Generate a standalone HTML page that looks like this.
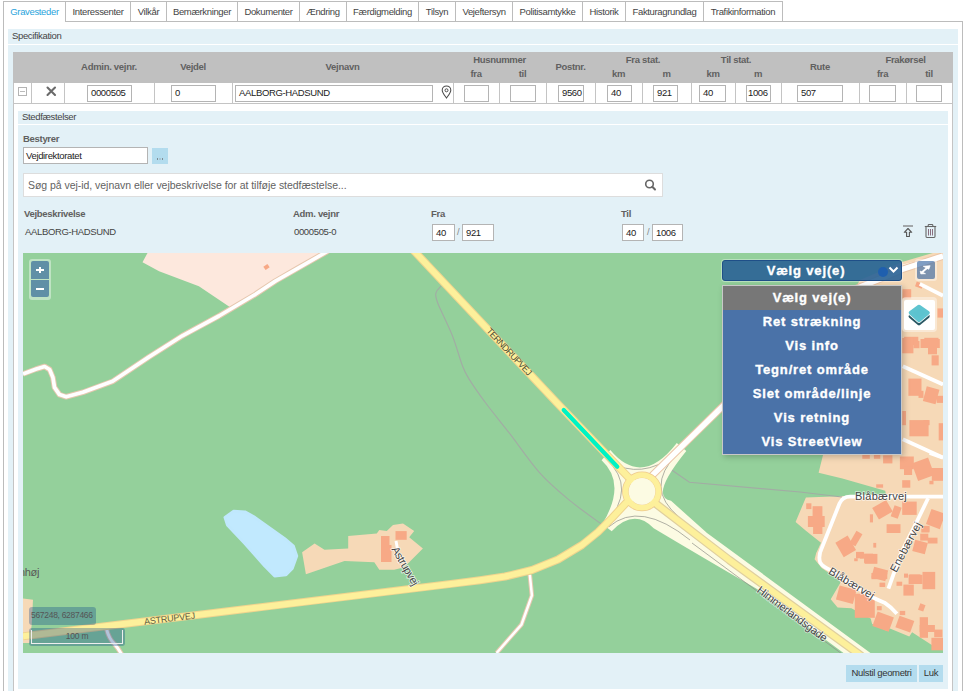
<!DOCTYPE html>
<html><head><meta charset="utf-8">
<style>
*{box-sizing:border-box;margin:0;padding:0}
html,body{width:964px;height:691px;overflow:hidden;background:#fff}
body{position:relative;font-family:"Liberation Sans",sans-serif;font-size:9.5px;color:#444;letter-spacing:-0.35px}
.a{position:absolute}
.t{position:absolute;white-space:nowrap;line-height:12px}
.tab{position:absolute;top:1px;height:21px;border:1px solid #bcbcbc;background:#fff;text-align:center;line-height:19px;color:#444}
.hd{position:absolute;font-weight:bold;color:#606060;letter-spacing:-0.3px;text-align:center;line-height:12px;white-space:nowrap}
.vd{position:absolute;top:83px;width:1px;height:20px;background:#c4c4c4}
.in{position:absolute;top:85px;height:17px;border:1px solid #b4b4b4;background:#fff;line-height:13px;padding-left:3px;color:#222;white-space:nowrap}
.ib{position:absolute;height:17px;border:1px solid #b4b4b4;background:#fff;line-height:15px;padding-left:3px;color:#222;white-space:nowrap}
.lbl{position:absolute;font-weight:bold;color:#606060;letter-spacing:-0.3px;white-space:nowrap;line-height:12px}
</style></head><body>

<!-- outer container -->
<div class="a" style="left:3px;top:21px;width:960px;height:680px;border:1px solid #bcbcbc;border-bottom:none"></div>

<!-- tabs -->
<div class="tab" style="left:3px;width:63px;border-bottom:none;height:21px;color:#2aa4dc">Gravesteder</div>
<div class="a" style="left:4px;top:21px;width:61px;height:1px;background:#fff"></div>
<div class="tab" style="left:65px;width:66px">Interessenter</div>
<div class="tab" style="left:130px;width:37px">Vilkår</div>
<div class="tab" style="left:166px;width:72px">Bemærkninger</div>
<div class="tab" style="left:237px;width:63px">Dokumenter</div>
<div class="tab" style="left:299px;width:48px">Ændring</div>
<div class="tab" style="left:346px;width:73px">Færdigmelding</div>
<div class="tab" style="left:418px;width:38px">Tilsyn</div>
<div class="tab" style="left:455px;width:58px">Vejeftersyn</div>
<div class="tab" style="left:512px;width:71px">Politisamtykke</div>
<div class="tab" style="left:582px;width:44px">Historik</div>
<div class="tab" style="left:625px;width:79px">Fakturagrundlag</div>
<div class="tab" style="left:703px;width:80px">Trafikinformation</div>

<!-- specification -->
<div class="a" style="left:8px;top:29px;width:950px;height:15px;background:#e3f1f7"></div>
<div class="t" style="left:12px;top:30px">Specifikation</div>
<div class="a" style="left:8px;top:45px;width:950px;height:646px;background:#e3f1f7"></div>

<!-- table -->
<div class="a" style="left:13px;top:52px;width:940px;height:639px;background:#fff;border:1px solid #c4c4c4;border-top:none;border-bottom:none"></div>
<div class="a" style="left:13px;top:52px;width:940px;height:31px;background:#c0c0c0"></div>
<div class="a" style="left:13px;top:103px;width:940px;height:1px;background:#c4c4c4"></div>

<div class="hd" style="left:64px;width:90px;top:61px">Admin. vejnr.</div>
<div class="hd" style="left:154px;width:78px;top:61px">Vejdel</div>
<div class="hd" style="left:232px;width:221px;top:61px">Vejnavn</div>
<div class="hd" style="left:453px;width:93px;top:54px">Husnummer</div>
<div class="hd" style="left:453px;width:46px;top:68px">fra</div>
<div class="hd" style="left:499px;width:47px;top:68px">til</div>
<div class="hd" style="left:546px;width:49px;top:61px">Postnr.</div>
<div class="hd" style="left:595px;width:96px;top:54px">Fra stat.</div>
<div class="hd" style="left:595px;width:47px;top:68px">km</div>
<div class="hd" style="left:642px;width:49px;top:68px">m</div>
<div class="hd" style="left:691px;width:90px;top:54px">Til stat.</div>
<div class="hd" style="left:691px;width:44px;top:68px">km</div>
<div class="hd" style="left:735px;width:46px;top:68px">m</div>
<div class="hd" style="left:781px;width:78px;top:61px">Rute</div>
<div class="hd" style="left:859px;width:93px;top:54px">Frakørsel</div>
<div class="hd" style="left:859px;width:47px;top:68px">fra</div>
<div class="hd" style="left:906px;width:46px;top:68px">til</div>

<div class="vd" style="left:31px"></div>
<div class="vd" style="left:64px"></div>
<div class="vd" style="left:154px"></div>
<div class="vd" style="left:232px"></div>
<div class="vd" style="left:453px"></div>
<div class="vd" style="left:499px"></div>
<div class="vd" style="left:546px"></div>
<div class="vd" style="left:595px"></div>
<div class="vd" style="left:642px"></div>
<div class="vd" style="left:691px"></div>
<div class="vd" style="left:735px"></div>
<div class="vd" style="left:781px"></div>
<div class="vd" style="left:859px"></div>
<div class="vd" style="left:906px"></div>

<!-- row icons -->
<div class="a" style="left:18px;top:87px;width:9px;height:9px;border:1px solid #b4b4b4"><div class="a" style="left:1px;top:3px;width:5px;height:1px;background:#bbb"></div></div>
<svg class="a" style="left:45px;top:85px" width="12" height="12" viewBox="0 0 12 12"><path d="M2.5 2.5L10 10M10 2.5L2.5 10" stroke="#6a6a6a" stroke-width="2.1" stroke-linecap="round"/></svg>

<div class="in" style="left:87px;width:45px">0000505</div>
<div class="in" style="left:171px;width:45px">0</div>
<div class="in" style="left:235px;width:198px">AALBORG-HADSUND</div>
<svg class="a" style="left:441px;top:85px" width="11" height="14" viewBox="0 0 11 14"><path d="M5.5 13C3 9.5 1.2 7.3 1.2 5.2A4.3 4.3 0 0 1 9.8 5.2C9.8 7.3 8 9.5 5.5 13Z" fill="none" stroke="#4a4a4a" stroke-width="1.05"/><circle cx="5.5" cy="5.3" r="1.5" fill="none" stroke="#4a4a4a" stroke-width="1"/></svg>
<div class="in" style="left:464px;width:25px"></div>
<div class="in" style="left:510px;width:26px"></div>
<div class="in" style="left:558px;width:26px">9560</div>
<div class="in" style="left:607px;width:25px">40</div>
<div class="in" style="left:653px;width:25px">921</div>
<div class="in" style="left:699px;width:27px">40</div>
<div class="in" style="left:746px;width:25px;padding-left:1px">1006</div>
<div class="in" style="left:797px;width:46px">507</div>
<div class="in" style="left:869px;width:27px"></div>
<div class="in" style="left:916px;width:26px"></div>

<!-- stedfaestelser panel -->
<div class="a" style="left:18px;top:111px;width:930px;height:13px;background:#e3f1f7"></div>
<div class="t" style="left:22px;top:111px;color:#444">Stedfæstelser</div>
<div class="a" style="left:18px;top:125px;width:930px;height:564px;background:#e3f1f7"></div>

<div class="lbl" style="left:23px;top:133px">Bestyrer</div>
<div class="ib" style="left:23px;top:147px;width:125px;padding-left:2px">Vejdirektoratet</div>
<div class="a" style="left:152px;top:148px;width:16px;height:16px;background:#b3dcee"></div>
<div class="a" style="left:157px;top:158px;width:1px;height:2px;background:#7e8c94"></div><div class="a" style="left:159px;top:158px;width:2px;height:2px;background:#a9c3cf"></div><div class="a" style="left:162px;top:158px;width:1px;height:2px;background:#7e8c94"></div>

<div class="a" style="left:23px;top:173px;width:640px;height:24px;background:#fff;border:1px solid #ddd"></div>
<div class="t" style="left:28px;top:179px;font-size:10.5px;letter-spacing:-0.04px;color:#626262">Søg på vej-id, vejnavn eller vejbeskrivelse for at tilføje stedfæstelse...</div>
<svg class="a" style="left:644px;top:179px" width="13" height="12" viewBox="0 0 13 12"><circle cx="5.5" cy="5" r="3.8" fill="none" stroke="#666" stroke-width="1.6"/><path d="M8.3 7.8L11 10.5" stroke="#666" stroke-width="2" stroke-linecap="round"/></svg>

<div class="lbl" style="left:24px;top:208px">Vejbeskrivelse</div>
<div class="lbl" style="left:293px;top:208px">Adm. vejnr</div>
<div class="lbl" style="left:431px;top:208px">Fra</div>
<div class="lbl" style="left:621px;top:208px">Til</div>
<div class="t" style="left:25px;top:226px">AALBORG-HADSUND</div>
<div class="t" style="left:294px;top:226px">0000505-0</div>
<div class="ib" style="left:432px;top:224px;width:23px">40</div>
<div class="t" style="left:457px;top:226px;color:#888">/</div>
<div class="ib" style="left:462px;top:224px;width:32px">921</div>
<div class="ib" style="left:622px;top:224px;width:22px">40</div>
<div class="t" style="left:647px;top:226px;color:#888">/</div>
<div class="ib" style="left:652px;top:224px;width:31px">1006</div>

<svg class="a" style="left:902px;top:224px" width="12" height="14" viewBox="0 0 12 14"><path d="M1 2H11" stroke="#777" stroke-width="1.2"/><path d="M6 4.5L2.3 8.3H4.6V12.5H7.4V8.3H9.7Z" fill="none" stroke="#555" stroke-width="1.1" stroke-linejoin="round"/></svg>
<svg class="a" style="left:924px;top:223px" width="13" height="16" viewBox="0 0 13 16"><path d="M0.8 3.5H12.2" stroke="#666" stroke-width="1.1"/><path d="M4.2 3.2V2.3Q4.2 1.5 5 1.5H8Q8.8 1.5 8.8 2.3V3.2" fill="none" stroke="#666" stroke-width="1.1"/><path d="M2 4V13.6Q2 14.5 2.9 14.5H10.1Q11 14.5 11 13.6V4" fill="none" stroke="#666" stroke-width="1.1"/><path d="M4.5 6V12.5M6.5 6V12.5M8.5 6V12.5" stroke="#8a6f80" stroke-width="1"/></svg>

<!-- MAP -->
<div class="a" id="map" style="left:23px;top:253px;width:920px;height:400px;background:#94d09a;overflow:hidden">
<svg width="920" height="400" viewBox="23 253 920 400" style="position:absolute;left:0;top:0">
<rect x="23" y="253" width="920" height="400" fill="#94d09b"/>
<!-- pink area -->
<polygon points="147.5,253 142.5,262.3 159.1,271.3 198.9,286.2 230.5,307.5 255.4,294.3 275.3,281.1 298.5,267.8 324,253" fill="#fde8dd"/>
<!-- residential beige -->
<polygon points="943,250 902,262 860,280 830,330 823,455 818.6,472.8 842.4,478.4 885.2,490.8 886,494.6 805.9,497.4 795.6,522 805.9,530.8 821,542.7 816.2,553 814.6,559.3 821.7,568.1 839.2,580 840.4,582.7 830.7,599.2 837.6,607.5 851.4,608.2 870.7,618.5 872.1,624 887.3,631 889.3,628.2 909.3,636.5 912.1,632.3 931.4,644.7 943,650.3" fill="#f6d9b7"/>
<!-- farm -->
<polygon points="302.1,552.3 314.6,543.6 324.5,549.8 348.2,548.5 348.2,536.1 376.8,533.6 379.3,529.9 386.8,531.1 393,524.9 403,523.6 414.2,531.1 409.2,537.3 422.9,548.5 404.2,567.2 394.2,569.7 379.3,569.7 374.3,562.2 344.5,561 305.9,574.2" fill="#f6d9b7"/>
<polygon points="23,598.6 33,599.8 31.7,624.7 29.5,643 23,643" fill="#f6d9b7"/>
<!-- lake -->
<polygon points="225,517.4 233.7,511.2 244.9,511.9 254.8,517.4 284.7,538.6 293.4,546.1 296.7,556 292.2,568.5 286,574.7 274.7,575.9 264.8,566 244.9,543.6 227.4,524.9" fill="#c1e9fe" stroke="#c0e8fd" stroke-width="3" stroke-linejoin="round"/>
<!-- buildings -->
<g fill="#f7a986">
<rect x="381.0" y="536.0" width="8.5" height="26.0"/>
<rect x="384.0" y="545.0" width="7.5" height="17.0"/>
<rect x="395.5" y="531.1" width="11.2" height="8.7"/>
<rect x="264.0" y="265.0" width="5.0" height="4.0" transform="rotate(-35 266.5 267.0)"/>
<rect x="862.3" y="454.7" width="7.5" height="4.1"/>
<rect x="873.9" y="454.7" width="6.4" height="4.1"/>
<rect x="883.1" y="455.3" width="9.3" height="8.1"/>
<rect x="899.9" y="456.5" width="13.9" height="12.7"/>
<rect x="904.0" y="466.9" width="8.1" height="8.1"/>
<rect x="914.4" y="459.9" width="17.4" height="18.6" transform="rotate(-20 923.1 469.2)"/>
<rect x="931.8" y="468.0" width="11.2" height="12.8"/>
<rect x="929.4" y="480.8" width="4.1" height="3.5"/>
<rect x="902.2" y="480.2" width="8.1" height="7.5"/>
<rect x="876.2" y="484.3" width="6.9" height="3.4"/>
<rect x="874.5" y="503.0" width="16.0" height="13.5" transform="rotate(-30 882.5 509.8)"/>
<rect x="892.4" y="506.2" width="7.5" height="11.6" transform="rotate(20 896.1 512.0)"/>
<rect x="902.2" y="501.6" width="14.5" height="13.3"/>
<rect x="928.3" y="510.9" width="14.7" height="16.2" transform="rotate(20 935.6 519.0)"/>
<rect x="886.6" y="524.2" width="13.9" height="8.8"/>
<rect x="922.5" y="525.9" width="6.9" height="5.8"/>
<rect x="806.2" y="503.3" width="5.2" height="5.8"/>
<rect x="812.6" y="506.2" width="9.8" height="12.7"/>
<rect x="807.9" y="516.0" width="16.8" height="11.0"/>
<rect x="813.1" y="524.7" width="9.3" height="9.3"/>
<rect x="838.6" y="538.0" width="14.2" height="16.8" transform="rotate(-30 845.7 546.4)"/>
<rect x="852.5" y="531.5" width="6.9" height="14.1" transform="rotate(30 856.0 538.5)"/>
<rect x="856.0" y="551.9" width="7.5" height="6.4"/>
<rect x="864.1" y="553.7" width="8.9" height="9.2"/>
<rect x="854.2" y="558.3" width="3.5" height="2.9"/>
<rect x="869.9" y="514.3" width="3.1" height="8.1"/>
<rect x="921.3" y="526.2" width="8.1" height="6.3"/>
<rect x="920.2" y="533.7" width="8.1" height="6.9"/>
<rect x="927.7" y="537.7" width="9.8" height="5.8"/>
<rect x="913.5" y="541.2" width="13.0" height="11.6" transform="rotate(15 920.0 547.0)"/>
<rect x="873.3" y="542.9" width="2.9" height="4.7"/>
<rect x="860.0" y="552.2" width="4.1" height="6.4"/>
<rect x="864.6" y="553.9" width="12.8" height="9.9"/>
<rect x="872.5" y="568.5" width="14.5" height="11.0" transform="rotate(15 879.8 574.0)"/>
<rect x="879.7" y="582.9" width="5.2" height="4.0"/>
<rect x="904.0" y="573.6" width="4.0" height="4.1"/>
<rect x="896.5" y="581.7" width="5.7" height="4.1"/>
<rect x="922.5" y="571.9" width="12.7" height="17.3"/>
<rect x="908.6" y="574.8" width="13.9" height="9.2"/>
<rect x="903.4" y="584.6" width="10.4" height="11.0"/>
<rect x="871.4" y="573.0" width="15.9" height="6.2"/>
<rect x="909.3" y="574.4" width="11.1" height="9.6"/>
<rect x="879.7" y="582.7" width="5.5" height="4.1"/>
<rect x="837.5" y="587.5" width="17.5" height="14.5" transform="rotate(15 846.2 594.8)"/>
<rect x="854.8" y="593.7" width="20.0" height="24.1"/>
<rect x="876.9" y="606.1" width="4.8" height="4.2"/>
<rect x="874.5" y="614.0" width="17.3" height="15.3" transform="rotate(20 883.1 621.6)"/>
<rect x="899.7" y="610.9" width="5.5" height="4.2"/>
<rect x="897.0" y="618.0" width="15.7" height="12.2" transform="rotate(20 904.9 624.1)"/>
<rect x="919.0" y="604.0" width="5.5" height="6.9" transform="rotate(20 921.8 607.5)"/>
<rect x="919.7" y="617.2" width="8.3" height="20.6"/>
<rect x="919.7" y="625.0" width="15.2" height="7.0"/>
<rect x="934.2" y="629.6" width="8.2" height="7.6"/>
<rect x="931.4" y="637.8" width="11.6" height="12.5"/>
<rect x="915.7" y="282.6" width="7.1" height="5.1" transform="rotate(20 919.2 285.1)"/>
<rect x="902.6" y="289.2" width="8.6" height="9.1"/>
<rect x="937.5" y="308.4" width="5.5" height="9.2"/>
<rect x="904.1" y="336.8" width="14.2" height="8.2"/>
<rect x="924.3" y="337.8" width="14.2" height="7.2"/>
<rect x="902.3" y="338.0" width="11.1" height="15.3"/>
<rect x="913.4" y="341.0" width="6.1" height="7.2"/>
<rect x="920.5" y="339.0" width="19.3" height="9.0"/>
<rect x="928.0" y="345.0" width="9.0" height="9.3"/>
<rect x="931.6" y="355.3" width="7.1" height="10.1"/>
<rect x="908.4" y="378.6" width="13.1" height="17.2"/>
<rect x="918.5" y="390.8" width="5.0" height="7.1"/>
<rect x="924.6" y="387.7" width="13.1" height="15.2" transform="rotate(15 931.2 395.3)"/>
<rect x="936.7" y="395.8" width="6.3" height="7.1"/>
<rect x="902.3" y="411.0" width="3.7" height="14.2"/>
<rect x="909.4" y="420.1" width="19.2" height="16.2"/>
<rect x="923.5" y="420.1" width="6.1" height="5.1"/>
<rect x="938.7" y="423.2" width="4.3" height="17.2"/>
</g>
<!-- gray paths -->
<g fill="none" stroke="#a2aca4" stroke-width="1.15">
<path d="M441,286.2 C440.2,287.3 436.6,290.0 436,292.8 C435.4,295.6 434.9,295.6 437.6,302.8 C440.4,310.0 448.4,325.5 452.5,336 C456.6,346.5 459.7,358.7 462.5,365.9 C465.3,373.1 465.2,372.9 469.1,379.1 C473.0,385.3 479.0,394.0 485.7,403 C492.4,412.0 500.4,421.6 509.4,433.2 C518.4,444.8 529.5,461.4 539.5,472.6 C549.5,483.8 558.9,491.5 569.6,500.4 C580.4,509.3 598.3,521.7 604,526"/>
<polyline points="669.5,468.5 689.4,482.2 800,492 842,497"/>
</g>
<!-- white road 1 -->
<polyline points="23,374 36.3,369 44.6,366.5 49.6,369.5 52.9,377.5 54.5,387.4 59.5,394.6 66.2,396.8 82.8,392.3 112.6,381.3 149.1,356.9 182.3,335.8 218.9,316 255.4,294.3 275.3,281.1 298.5,267.8 328,251" fill="none" stroke="#e6c7af" stroke-width="5.6" stroke-linejoin="round"/>
<polyline points="23,374 36.3,369 44.6,366.5 49.6,369.5 52.9,377.5 54.5,387.4 59.5,394.6 66.2,396.8 82.8,392.3 112.6,381.3 149.1,356.9 182.3,335.8 218.9,316 255.4,294.3 275.3,281.1 298.5,267.8 328,251" fill="none" stroke="#fff" stroke-width="3.7" stroke-linejoin="round"/>
<!-- white road bottom -->
<polyline points="529.8,574.7 531.9,595.4 521.5,624.5 496.6,653" fill="none" stroke="#e6c7af" stroke-width="4.5"/>
<polyline points="529.8,574.7 531.9,595.4 521.5,624.5 496.6,653" fill="none" stroke="#fff" stroke-width="2.5"/>
<path d="M106.5,629 Q109,639 114.5,644 Q118,648 122,655" fill="none" stroke="#e6c7af" stroke-width="5"/>
<path d="M106.5,629 Q109,639 114.5,644 Q118,648 122,655" fill="none" stroke="#fff" stroke-width="3"/>
<!-- cream star around roundabout -->
<path d="M601.6,460.3 L610.3,450.1 Q642,488 676.8,442.9 L686.3,450.9 Q649,496.8 671,500.8 L707,533 L880,660 L880,680 L757,589 Q700,556 653.7,528.3 Q634,508 611.7,531.2 L602.3,524 Q627,483.5 601.6,460.3Z" fill="#fcfbe3"/>
<g fill="none" stroke="#8f8f88" stroke-width="0.7">
<path d="M700,537 L870,662"/>
<path d="M692,543 L865,671"/>
<path d="M608.8,461.7 Q642,480 674,455"/>
<path d="M605.9,458.8 Q638,488 604.5,525.4"/>
<path d="M677,454 Q644,488 679,517"/>
<path d="M608.8,526.8 Q640,500 690,540"/>
</g>
<!-- residential white roads -->
<g fill="none" stroke="#fff" stroke-width="3.8" stroke-linejoin="round">

<path d="M943,496.6 L850,496.6 Q842.5,496.6 839.5,503.5 L821.7,548.2 Q818,556 820.2,562.5 Q823,567 829.7,569.7 L870.7,596.5 Q878,600 884.5,602.7 Q891,607 896.9,613.7"/>
<polyline points="928.1,498.2 917,521.3 901.1,553 888.4,588.7"/>
<polyline points="929.7,453 943,457.8"/>
<polyline points="902.8,439.3 943,457.5"/>
<polyline points="902.8,366.2 943,384.4"/>
<polyline points="919.8,283.9 943,295.7"/>
<polyline points="902.9,266.5 943,256"/>
</g>
<!-- NE white road from roundabout -->
<polyline points="642,487 653,474.6 722,407 760,365 800,322 845,293 880,279 902,269.5 943,256" fill="none" stroke="#ebc5a8" stroke-width="7.5"/>
<polyline points="642,487 653,474.6 722,407 760,365 800,322 845,293 880,279 902,269.5 943,256" fill="none" stroke="#fff" stroke-width="5.5"/>
<!-- yellow roads -->
<g fill="none" stroke-linejoin="round" stroke-linecap="butt">
<polyline points="412,249 416,253 557.1,403 642,491.4" stroke="#f0d48e" stroke-width="8"/>
<polyline points="23,636.3 263,606.9 455,583.4 480,580.2 505,576.5 532,570 558,559.5 582,545 598,532 612,518 626,503 642,491.4" stroke="#f0d48e" stroke-width="8"/>
<polyline points="642,491.4 657,504.6 729.3,560 857.6,653.1 865,659" stroke="#e0cf9e" stroke-width="8.5"/>
<circle cx="642" cy="491.4" r="16.4" stroke="#efc98e" stroke-width="7"/>
<polyline points="412,249 416,253 557.1,403 642,491.4" stroke="#fdf09b" stroke-width="6"/>
<polyline points="23,636.3 263,606.9 455,583.4 480,580.2 505,576.5 532,570 558,559.5 582,545 598,532 612,518 626,503 642,491.4" stroke="#fdf09b" stroke-width="6"/>
<polyline points="642,491.4 657,504.6 729.3,560 857.6,653.1 865,659" stroke="#fdf09b" stroke-width="6"/>
<circle cx="642" cy="491.4" r="16.4" stroke="#fdf09b" stroke-width="5.6"/>
<circle cx="642" cy="491.4" r="13.3" fill="#fcfbe3" stroke="none"/>
</g>
<!-- cyan -->
<line x1="563.7" y1="410" x2="617.3" y2="466.7" stroke="#00f2c4" stroke-width="4.2" stroke-linecap="round"/>
<line x1="396" y1="541" x2="397.5" y2="549" stroke="#fff" stroke-width="3"/>
<!-- labels -->
<g font-family="Liberation Sans" fill="#444">
<text x="0" y="3" transform="translate(509,351.5) rotate(46.8)" text-anchor="middle" font-size="9" fill="#4d4b36" letter-spacing="-0.5">TERNDRUPVEJ</text>
<text x="0" y="3" transform="translate(169.5,618.6) rotate(-7)" text-anchor="middle" font-size="9" fill="#5d5b45" letter-spacing="-0.2">ASTRUPVEJ</text>
<text x="0" y="3.5" transform="translate(405,566) rotate(60)" text-anchor="middle" font-size="11" fill="#444" stroke="#fff" stroke-width="1.6" paint-order="stroke" stroke-opacity="0.7">Astrupvej</text>
<text x="19" y="575.6" font-size="11" fill="#585858">nhøj</text>
<text x="881" y="500" text-anchor="middle" font-size="11" letter-spacing="0.3" fill="#444" stroke="#fff" stroke-width="1.6" paint-order="stroke" stroke-opacity="0.6">Blåbærvej</text>
<text x="0" y="3.5" transform="translate(851.5,583.5) rotate(31)" text-anchor="middle" font-size="11" letter-spacing="0.2" fill="#444" stroke="#fff" stroke-width="1.6" paint-order="stroke" stroke-opacity="0.6">Blåbærvej</text>
<text x="0" y="3.5" transform="translate(906,547) rotate(-62)" text-anchor="middle" font-size="11" letter-spacing="0.2" fill="#444" stroke="#fff" stroke-width="1.6" paint-order="stroke" stroke-opacity="0.6">Enebærvej</text>
<text x="0" y="3.5" transform="translate(792,614) rotate(36.9)" text-anchor="middle" font-size="11" fill="#444" stroke="#fff" stroke-width="1.6" paint-order="stroke" stroke-opacity="0.6">Himmerlandsgade</text>
</g>
</svg>

</div>

<!-- map overlays -->
<div class="a" style="left:29px;top:259px;width:22px;height:41px;border-radius:3px;background:rgba(255,255,255,0.4)"></div>
<div class="a" style="left:31px;top:261px;width:18px;height:18px;border-radius:2px 2px 0 0;background:#608fa6"></div>
<div class="a" style="left:31px;top:280px;width:18px;height:17px;border-radius:0 0 2px 2px;background:#608fa6"></div>
<div class="a" style="left:36px;top:269px;width:8px;height:2px;background:#fff"></div>
<div class="a" style="left:39px;top:267px;width:2px;height:6px;background:#fff"></div>
<div class="a" style="left:36px;top:288px;width:8px;height:2px;background:#fff"></div>

<div class="a" style="left:29px;top:607px;width:67px;height:18px;border-radius:3px;background:rgba(0,60,136,0.3)"></div>
<div class="t" style="left:31px;top:608px;font-size:8.5px;letter-spacing:-0.3px;color:#555;line-height:14px">567248, 6287466</div>
<div class="a" style="left:29px;top:628px;width:96px;height:18px;border-radius:3px;background:rgba(0,60,136,0.3)"></div>
<div class="a" style="left:31px;top:630px;width:92px;height:14px;border:1px solid #eee;border-top:none"></div>
<div class="t" style="left:31px;top:630px;width:92px;text-align:center;font-size:8.5px;letter-spacing:-0.2px;color:#555;line-height:12px">100 m</div>

<div class="a" style="left:722px;top:260px;width:180px;height:21px;border-radius:3px;background:rgba(45,100,150,0.92);border:1px solid #1f4f88;box-shadow:0 0 0 1px rgba(255,255,255,0.35)"></div>
<div class="t" style="left:722px;top:260px;width:180px;text-align:center;font-weight:bold;font-size:13px;letter-spacing:0.85px;-webkit-text-stroke:0.35px #fff;color:#fff;line-height:21px;padding-right:12px">Vælg vej(e)</div>
<div class="a" style="left:878px;top:267px;width:10px;height:10px;border-radius:50%;background:#1f5fae"></div>
<svg class="a" style="left:888px;top:266px" width="11" height="8" viewBox="0 0 11 8"><path d="M1.5 1.5L5.5 5.5L9.5 1.5" fill="none" stroke="#fff" stroke-width="2"/></svg>

<div class="a" style="left:915px;top:259px;width:22px;height:22px;border-radius:3px;background:rgba(255,255,255,0.4)"></div>
<div class="a" style="left:917px;top:261px;width:18px;height:18px;border-radius:2px;background:rgba(0,60,136,0.5)"></div>
<svg class="a" style="left:917px;top:261px" width="18" height="18" viewBox="0 0 18 18"><path d="M5 11.2L11.2 6" stroke="#fff" stroke-width="1.9"/><path d="M6.3 5.3L13.1 4.7L11.8 8.3Z M3.2 10.1L3.8 12.9L8.5 12.7Z" fill="#fff" stroke="#fff" stroke-width="0.7" stroke-linejoin="round"/></svg>

<div class="a" style="left:722px;top:285px;width:180px;height:170px;background:#4a72a8;border:1px solid #c8c8c8;box-shadow:2px 2px 6px rgba(0,0,0,0.22)"></div>
<div class="a" style="left:723px;top:286px;width:178px;height:24px;background:#777"></div>
<div class="a" style="left:722px;top:286px;width:180px;font-weight:bold;font-size:13px;letter-spacing:0.85px;-webkit-text-stroke:0.35px #fff;color:#fff;line-height:24px;text-align:center;white-space:nowrap">
<div>Vælg vej(e)</div><div>Ret strækning</div><div>Vis info</div><div>Tegn/ret område</div><div>Slet område/linje</div><div>Vis retning</div><div>Vis StreetView</div>
</div>

<div class="a" style="left:902px;top:297px;width:35px;height:35px;border-radius:4px;background:rgba(255,255,255,0.4)"></div>
<div class="a" style="left:904px;top:300px;width:31px;height:30px;border-radius:2px;background:#fff"></div>
<svg class="a" style="left:904px;top:300px" width="31" height="30" viewBox="0 0 31 30"><path d="M15 10L24 16.3L15 23.6L6.3 16.3Z" fill="#2a5864" stroke="#2a5864" stroke-width="3.5" stroke-linejoin="round"/><path d="M15 6.5L24 12.8L15 20.3L6.5 12.8Z" fill="#fff" stroke="#fff" stroke-width="5.2" stroke-linejoin="round"/><path d="M15 6.5L24 12.8L15 20.3L6.5 12.8Z" fill="#5cc3cf" stroke="#5ec4d0" stroke-width="3.6" stroke-linejoin="round"/></svg>

<!-- bottom buttons -->
<div class="a" style="left:846px;top:665px;width:71px;height:17px;background:#b3dcee;text-align:center;line-height:15px;color:#333">Nulstil geometri</div>
<div class="a" style="left:919px;top:665px;width:24px;height:17px;background:#b3dcee;text-align:center;line-height:15px;color:#333">Luk</div>

</body></html>
